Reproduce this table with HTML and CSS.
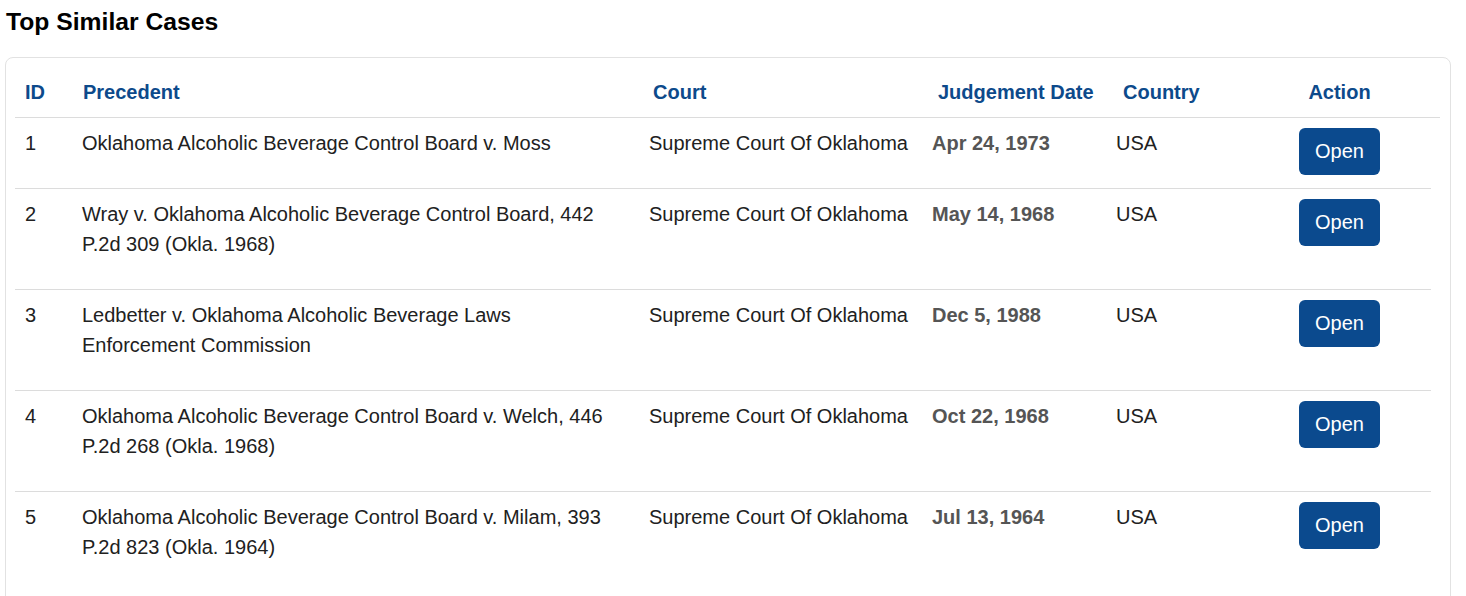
FILE: index.html
```html
<!DOCTYPE html>
<html>
<head>
<meta charset="utf-8">
<link rel="stylesheet" href="styles.css">
</head>
<body>
<h2 class="title">Top Similar Cases</h2>
<div class="card">
  <div class="head">
    <div class="hcell">ID</div>
    <div class="hcell">Precedent</div>
    <div class="hcell">Court</div>
    <div class="hcell">Judgement Date</div>
    <div class="hcell">Country</div>
    <div class="hcell center">Action</div>
  </div>
  <div class="rows">
    <div class="row">
      <div class="cell">1</div>
      <div class="cell">Oklahoma Alcoholic Beverage Control Board v. Moss</div>
      <div class="cell">Supreme Court Of Oklahoma</div>
      <div class="cell date">Apr 24, 1973</div>
      <div class="cell">USA</div>
      <div class="cell action"><button class="btn">Open</button></div>
    </div>
    <div class="row">
      <div class="cell">2</div>
      <div class="cell">Wray v. Oklahoma Alcoholic Beverage Control Board, 442 P.2d 309 (Okla. 1968)</div>
      <div class="cell">Supreme Court Of Oklahoma</div>
      <div class="cell date">May 14, 1968</div>
      <div class="cell">USA</div>
      <div class="cell action"><button class="btn">Open</button></div>
    </div>
    <div class="row">
      <div class="cell">3</div>
      <div class="cell">Ledbetter v. Oklahoma Alcoholic Beverage Laws Enforcement Commission</div>
      <div class="cell">Supreme Court Of Oklahoma</div>
      <div class="cell date">Dec 5, 1988</div>
      <div class="cell">USA</div>
      <div class="cell action"><button class="btn">Open</button></div>
    </div>
    <div class="row">
      <div class="cell">4</div>
      <div class="cell">Oklahoma Alcoholic Beverage Control Board v. Welch, 446 P.2d 268 (Okla. 1968)</div>
      <div class="cell">Supreme Court Of Oklahoma</div>
      <div class="cell date">Oct 22, 1968</div>
      <div class="cell">USA</div>
      <div class="cell action"><button class="btn">Open</button></div>
    </div>
    <div class="row">
      <div class="cell">5</div>
      <div class="cell">Oklahoma Alcoholic Beverage Control Board v. Milam, 393 P.2d 823 (Okla. 1964)</div>
      <div class="cell">Supreme Court Of Oklahoma</div>
      <div class="cell date">Jul 13, 1964</div>
      <div class="cell">USA</div>
      <div class="cell action"><button class="btn">Open</button></div>
    </div>
  </div>
</div>
</body>
</html>
```

FILE: styles.css
```css
html, body {
  margin: 0;
  background: #ffffff;
}
body {
  padding: 0 15px 0 5px;
  font-family: "Liberation Sans", Arial, sans-serif;
  color: #212121;
}
.title {
  margin: 7px 0 21px 1px;
  font-size: 24.7px;
  line-height: 29px;
  font-weight: bold;
  color: #000;
}
.card {
  border: 1px solid #e2e2e2;
  border-radius: 8px;
  padding: 19px 10px 40px 9px;
  min-height: 600px;
  box-sizing: border-box;
}
.head {
  display: grid;
  grid-template-columns: 58px 570px 285px 185px 126px 201px;
  border-bottom: 1px solid #dcdcdc;
}
.hcell {
  padding: 0 10px 10px 10px;
  font-size: 20px;
  line-height: 30px;
  font-weight: bold;
  color: #0d4a8b;
  white-space: nowrap;
}
.hcell.center {
  text-align: center;
  padding-left: 0;
  padding-right: 0;
}
.rows {
  margin-right: 9px;
}
.row {
  display: grid;
  grid-template-columns: 57px 567px 283px 184px 142px 183px;
  border-bottom: 1px solid #dcdcdc;
}
.row:last-child {
  border-bottom: none;
}
.cell {
  padding: 10px 10px 30px 10px;
  font-size: 20px;
  line-height: 30px;
}
.cell.date {
  font-weight: bold;
  color: #555555;
}
.cell.action {
  padding: 10px 0 0 0;
  display: flex;
  justify-content: center;
  align-items: flex-start;
}
.btn {
  width: 81px;
  height: 47px;
  border: none;
  border-radius: 6px;
  background: #0b4a8e;
  color: #ffffff;
  font-family: "Liberation Sans", Arial, sans-serif;
  font-size: 20px;
  padding: 0;
}
```
